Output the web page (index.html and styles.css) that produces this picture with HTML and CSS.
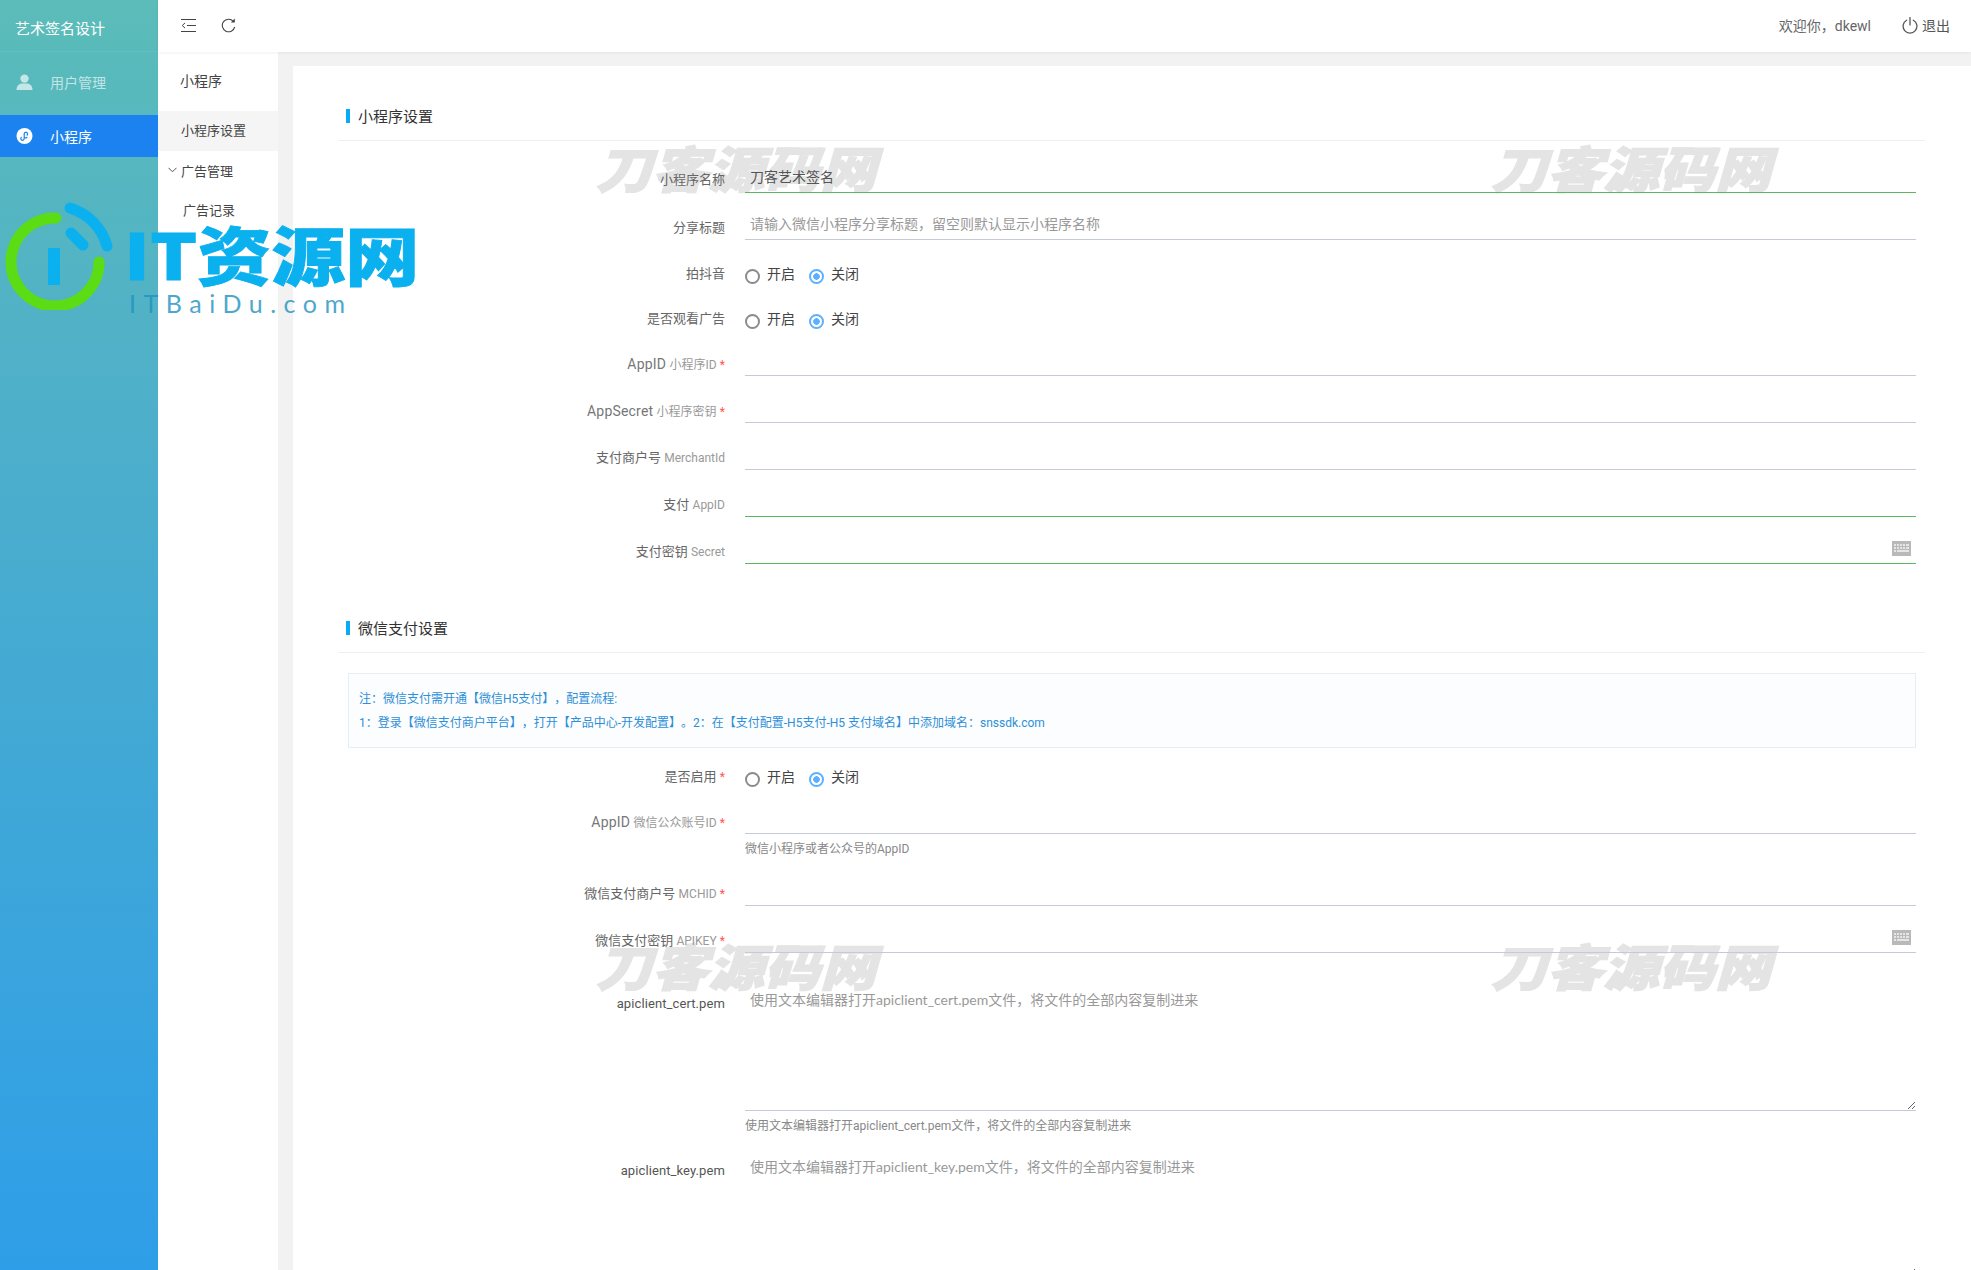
FILE: index.html
```html
<!DOCTYPE html>
<html lang="zh-CN">
<head>
<meta charset="utf-8">
<title>小程序设置</title>
<link rel="stylesheet" href="styles.css">
</head>
<body>
<div class="app">
  <aside class="sidebar">
    <div class="brand">艺术签名设计</div>
    <a class="nav-item">
      <svg class="nav-icon" viewBox="0 0 16 16"><circle cx="8" cy="4.600" r="4.200" fill="#fff"/><path d="M0 16c0-4 2.500-6 5-6.400h6c2.500.4 5 2.400 5 6.400z" fill="#fff"/></svg>
      <span>用户管理</span>
    </a>
    <a class="nav-item nav-item-active">
      <svg class="nav-icon nav-icon-solid" viewBox="0 0 16 16"><circle cx="8" cy="8" r="8" fill="#fff"/><path d="M4.800 9.400a1.700 1.700 0 1 0 2.900 1.200V6a1.700 1.700 0 1 1 2.900 1.200M8.600 9.800a1.600 1.600 0 0 0 1.800-.5" fill="none" stroke="#1b82ef" stroke-width="1.200" stroke-linecap="round"/></svg>
      <span>小程序</span>
    </a>
  </aside>

  <div class="main">
    <header class="topbar">
      <div class="tools">
        <svg class="tool" viewBox="0 0 15 14"><path d="M0 1h15M6 7h9M0 13h15M4 4.500 1.200 7 4 9.500" fill="none" stroke="#444" stroke-width="1"/></svg>
        <svg class="tool" viewBox="0 0 15 15"><path d="M12.300 3.300A6.300 6.300 0 1 0 13.700 9" fill="none" stroke="#444" stroke-width="1.100"/><path d="M13.800 0.500v4h-4z" fill="#444"/></svg>
      </div>
      <div class="user">
        <span>欢迎你，dkewl</span>
        <span class="logout">
          <svg class="power" viewBox="0 0 15 16"><path d="M4.300 3a6.500 6.500 0 1 0 6.400 0M7.500 0.500v7" fill="none" stroke="#555" stroke-width="1.200" stroke-linecap="round"/></svg>
          退出
        </span>
      </div>
    </header>

    <div class="body">
      <nav class="subnav">
        <div class="subnav-title">小程序</div>
        <a class="subnav-item subnav-item-active">小程序设置</a>
        <a class="subnav-group">
          <svg class="chevron" viewBox="0 0 9 6"><path d="M0.500 0.800 4.500 4.800 8.500 0.800" fill="none" stroke="#555" stroke-width="1"/></svg>
          广告管理
        </a>
        <a class="subnav-item subnav-child">广告记录</a>
      </nav>

      <div class="workspace">
        <main class="card">
          <div class="wm wm-a">刀客源码网</div>
          <div class="wm wm-b">刀客源码网</div>
          <div class="wm wm-c">刀客源码网</div>
          <div class="wm wm-d">刀客源码网</div>

          <section class="section">
            <h2 class="section-head"><span class="section-title">小程序设置</span></h2>
            <form class="form">
              <div class="row row-first">
                <label class="label">小程序名称</label>
                <div class="field"><input class="input input-ok" type="text" value="刀客艺术签名"></div>
              </div>
              <div class="row">
                <label class="label">分享标题</label>
                <div class="field"><input class="input" type="text" placeholder="请输入微信小程序分享标题，留空则默认显示小程序名称"></div>
              </div>
              <div class="row row-radio">
                <label class="label">拍抖音</label>
                <div class="radios">
                  <label class="radio"><input type="radio" name="r1">开启</label>
                  <label class="radio"><input type="radio" name="r1" checked>关闭</label>
                </div>
              </div>
              <div class="row row-radio row-radio-tight">
                <label class="label">是否观看广告</label>
                <div class="radios">
                  <label class="radio"><input type="radio" name="r2">开启</label>
                  <label class="radio"><input type="radio" name="r2" checked>关闭</label>
                </div>
              </div>
              <div class="row">
                <label class="label"><span class="en">AppID</span> <small>小程序ID</small> <em>*</em></label>
                <div class="field"><input class="input" type="text"></div>
              </div>
              <div class="row">
                <label class="label"><span class="en">AppSecret</span> <small>小程序密钥</small> <em>*</em></label>
                <div class="field"><input class="input" type="text"></div>
              </div>
              <div class="row">
                <label class="label">支付商户号 <small>MerchantId</small></label>
                <div class="field"><input class="input" type="text"></div>
              </div>
              <div class="row">
                <label class="label">支付 <small>AppID</small></label>
                <div class="field"><input class="input input-ok" type="text"></div>
              </div>
              <div class="row">
                <label class="label">支付密钥 <small>Secret</small></label>
                <div class="field">
                  <input class="input input-ok" type="text">
                  <svg class="keyboard" viewBox="0 0 19 15"><rect width="19" height="15" fill="#b9b9b9"/><path d="M2 4h2M5 4h2M8 4h2M11 4h2M14 4h3M2 7h2M5 7h2M8 7h2M11 7h2M14 7h3M2 10h2M5 10h12" stroke="#f4f4f4" stroke-width="1.500" fill="none"/></svg>
                </div>
              </div>
            </form>
          </section>

          <section class="section section-pay">
            <h2 class="section-head"><span class="section-title">微信支付设置</span></h2>
            <form class="form">
              <div class="alert">
                <p>注：微信支付需开通【微信H5支付】，配置流程:</p>
                <p>1：登录【微信支付商户平台】，打开【产品中心-开发配置】。2：在【支付配置-H5支付-H5 支付域名】中添加域名：snssdk.com</p>
              </div>
              <div class="row row-radio row-radio-pay">
                <label class="label">是否启用 <em>*</em></label>
                <div class="radios">
                  <label class="radio"><input type="radio" name="r3">开启</label>
                  <label class="radio"><input type="radio" name="r3" checked>关闭</label>
                </div>
              </div>
              <div class="row">
                <label class="label"><span class="en">AppID</span> <small>微信公众账号ID</small> <em>*</em></label>
                <div class="field">
                  <input class="input" type="text">
                  <p class="help">微信小程序或者公众号的AppID</p>
                </div>
              </div>
              <div class="row">
                <label class="label">微信支付商户号 <small>MCHID</small> <em>*</em></label>
                <div class="field"><input class="input" type="text"></div>
              </div>
              <div class="row">
                <label class="label">微信支付密钥 <small>APIKEY</small> <em>*</em></label>
                <div class="field">
                  <input class="input" type="text">
                  <svg class="keyboard" viewBox="0 0 19 15"><rect width="19" height="15" fill="#b9b9b9"/><path d="M2 4h2M5 4h2M8 4h2M11 4h2M14 4h3M2 7h2M5 7h2M8 7h2M11 7h2M14 7h3M2 10h2M5 10h12" stroke="#f4f4f4" stroke-width="1.500" fill="none"/></svg>
                </div>
              </div>
              <div class="row row-area">
                <label class="label label-dark">apiclient_cert.pem</label>
                <div class="field">
                  <textarea class="area" placeholder="使用文本编辑器打开apiclient_cert.pem文件，将文件的全部内容复制进来"></textarea>
                  <p class="help">使用文本编辑器打开apiclient_cert.pem文件，将文件的全部内容复制进来</p>
                </div>
              </div>
              <div class="row row-area-next">
                <label class="label label-dark">apiclient_key.pem</label>
                <div class="field">
                  <textarea class="area" placeholder="使用文本编辑器打开apiclient_key.pem文件，将文件的全部内容复制进来"></textarea>
                </div>
              </div>
            </form>
          </section>
        </main>
      </div>
    </div>
  </div>

  <div class="logo">
    <svg class="logo-mark" viewBox="0 0 115 115">
      <path d="M52 23A44 44 0 1 0 95 67" fill="none" stroke="#5bdc14" stroke-width="11" stroke-linecap="round"/>
      <path d="M66 13A55 55 0 0 1 103 51" fill="none" stroke="#0bb0ef" stroke-width="11" stroke-linecap="round"/>
      <path d="M67 38 79 50" fill="none" stroke="#0bb0ef" stroke-width="11" stroke-linecap="round"/>
      <rect x="44" y="53" width="12" height="37" fill="#0bb0ef"/>
    </svg>
    <div class="logo-name">IT资源网</div>
    <div class="logo-url">ITBaiDu.com</div>
  </div>
</div>
</body>
</html>
```

FILE: styles.css
```css
* { box-sizing: border-box; }
html, body { margin: 0; padding: 0; height: 100%; overflow: hidden; }
body {
  font-family: Roboto, "Noto Sans CJK SC", sans-serif;
  font-size: 13px;
  color: #666;
  background: #f2f2f2;
  text-spacing-trim: space-all;
}
.app { display: flex; height: 1270px; position: relative; overflow: hidden; }

/* primary sidebar */
.sidebar {
  width: 158px;
  flex: none;
  background: linear-gradient(180deg, #5bbcb9 0%, #4fb0c9 30%, #2e9ee8 100%);
  color: #fff;
}
.brand { height: 52px; line-height: 58px; padding-left: 15px; font-size: 15px; border-bottom: 1px solid rgba(255,255,255,.05); }
.nav-item {
  display: flex;
  align-items: center;
  height: 42px;
  padding-left: 16px;
  gap: 17px;
  font-size: 14px;
  color: rgba(255,255,255,.65);
  margin-top: 9px;
}
.nav-item-active { background: #1b82ef; color: #fff; margin-top: 12px; }
.nav-icon { width: 17px; height: 16px; opacity: .65; }
.nav-icon-solid { opacity: 1; }

/* main column */
.main { flex: 1; min-width: 0; display: flex; flex-direction: column; }
.topbar {
  height: 52px;
  flex: none;
  background: #fff;
  box-shadow: 0 1px 3px rgba(0,0,0,.06);
  display: flex;
  justify-content: space-between;
  align-items: center;
  padding: 0 21px 2px 23px;
  position: relative;
  font-size: 14px;
}
.tools { display: flex; gap: 25px; align-items: center; }
.tool { width: 15px; height: 15px; }
.user { display: flex; align-items: center; gap: 31px; color: #666; }
.logout { display: flex; align-items: center; gap: 4px; color: #555; }
.power { width: 16px; height: 17px; }

.body { flex: 1; min-height: 0; display: flex; }
.subnav { width: 120px; flex: none; background: #fff; color: #444; }
.subnav-title { height: 59px; line-height: 58px; padding-left: 22px; font-size: 14px; }
.subnav-item { display: block; height: 40px; line-height: 39px; padding-left: 23px; }
.subnav-item-active { background: #f5f5f5; }
.subnav-group { display: flex; align-items: center; height: 40px; padding: 0 0 2px 10px; gap: 4px; }
.subnav-child { padding-left: 25px; }
.chevron { width: 9px; height: 6px; }

.workspace { flex: 1; min-width: 0; padding: 14px 0 0 15px; }
.card { background: #fff; height: 1300px; padding: 27px 46px 0 45px; position: relative; }

/* watermarks */
.wm {
  position: absolute;
  font-size: 56px;
  line-height: 56px;
  font-weight: 900;
  font-style: italic;
  color: #e4e4e4;
  white-space: nowrap;
  -webkit-text-stroke: 1.500px #e4e4e4;
  transform: scaleY(.88);
}
.wm-a { left: 303px; top: 77px; }
.wm-b { left: 1198px; top: 77px; }
.wm-c { left: 303px; top: 875px; }
.wm-d { left: 1198px; top: 875px; }

/* sections */
.section { position: relative; z-index: 1; }
.section-pay { margin-top: 41px; }
.section-head {
  margin: 0;
  height: 48px;
  display: flex;
  align-items: center;
  padding: 0 0 2px 8px;
  border-bottom: 1px solid #eef0f4;
  font-size: 15px;
  font-weight: 400;
  color: #333;
}
.section-title { display: flex; align-items: center; gap: 8px; }
.section-title::before { content: ""; width: 4px; height: 14px; background: #0aaaf5; margin-top: 1px; }

/* form */
.form { padding: 18px 9px 0 10px; }
.section-pay .form { padding-top: 20px; }
.row { display: flex; margin-top: 13px; }
.row-first { margin-top: 0; }
.row-radio { margin-top: 13px; height: 45px; }
.row-radio-tight { margin-top: 0; height: 44px; }
.row-radio-pay { margin-top: 8px; height: 44px; }
.row-radio + .row:not(.row-radio) { margin-top: 0; }
.row-area { margin-top: 33px; }
.row-area-next { margin-top: 17px; }
.label {
  width: 377px;
  flex: none;
  text-align: right;
  padding-top: 13px;
  line-height: 18px;
  color: #666;
  white-space: nowrap;
}
.row-first .label { padding-top: 12px; }
.row-radio .label { padding-top: 12px; }
.row-area .label { padding-top: 9px; }
.row-area-next .label { padding-top: 9px; }
.label .en { font-size: 14px; letter-spacing: .2px; color: #777; }
.label small { font-size: 12px; color: #999; }
.label em { font-style: normal; color: #f55; font-size: 12px; }
.label-dark { color: #555; letter-spacing: .1px; }
.field { flex: 1; min-width: 0; margin-left: 20px; position: relative; }
.input {
  display: block;
  width: 100%;
  height: 34px;
  padding: 2px 5px 0;
  border: 0;
  border-bottom: 1px solid #c5cad8;
  background: transparent;
  font: inherit;
  font-size: 14px;
  color: #555;
  outline: none;
}
.row-first .input { padding-top: 0; }
.input-ok { border-bottom-color: #5cb85c; }
.input::placeholder, .area::placeholder { color: #999; opacity: 1; }
.area {
  display: block;
  width: 100%;
  height: 125px;
  padding: 5px;
  border: 0;
  border-bottom: 1px solid #c5cad8;
  background: transparent;
  font-family: Lato, "Noto Sans CJK SC", sans-serif;
  font-size: 14px;
  line-height: 18px;
  outline: none;
}
.help { margin: 6px 0 1px; font-size: 12px; line-height: 18px; color: #888; }
.keyboard { position: absolute; right: 5px; top: 11px; width: 19px; height: 15px; }

/* radios */
.radios { margin-left: 20px; padding-top: 12px; display: flex; gap: 14px; align-items: flex-start; }
.radio { display: flex; align-items: flex-start; line-height: 18px; color: #444; font-size: 14px; }
.radio input {
  appearance: none;
  width: 15px;
  height: 15px;
  margin: 4px 7px 0 0;
  border: 2px solid #8b8b8b;
  border-radius: 50%;
  background: #fff;
}
.radio input:checked { border-color: #5cb0ff; background: radial-gradient(circle, #5cb0ff 0 3px, #fff 3.500px); }

/* notice */
.alert {
  height: 75px;
  padding: 13px 9px 0 10px;
  background: #fbfdff;
  border: 1px solid #e4eef6;
  color: #2e8fd6;
  font-size: 12px;
}
.alert p { margin: 0; line-height: 24px; white-space: nowrap; }

/* logo overlay */
.logo { position: absolute; left: 0; top: 195px; width: 430px; height: 125px; pointer-events: none; }
.logo-mark { position: absolute; left: 4px; top: 0; width: 115px; height: 115px; }
.logo-name {
  position: absolute;
  left: 124px;
  top: 21px;
  font-family: "Noto Sans CJK SC", sans-serif;
  font-size: 74px;
  line-height: 72px;
  font-weight: 900;
  color: #0bb0ef;
  white-space: nowrap;
  -webkit-text-stroke: 1px #0bb0ef;
  transform: scaleY(.86);
}
.logo-url {
  position: absolute;
  left: 129px;
  top: 93px;
  font-family: "Lato", sans-serif;
  font-size: 25px;
  line-height: 30px;
  letter-spacing: 7.500px;
  color: #1f93bf;
  opacity: .8;
  white-space: nowrap;
}
```
